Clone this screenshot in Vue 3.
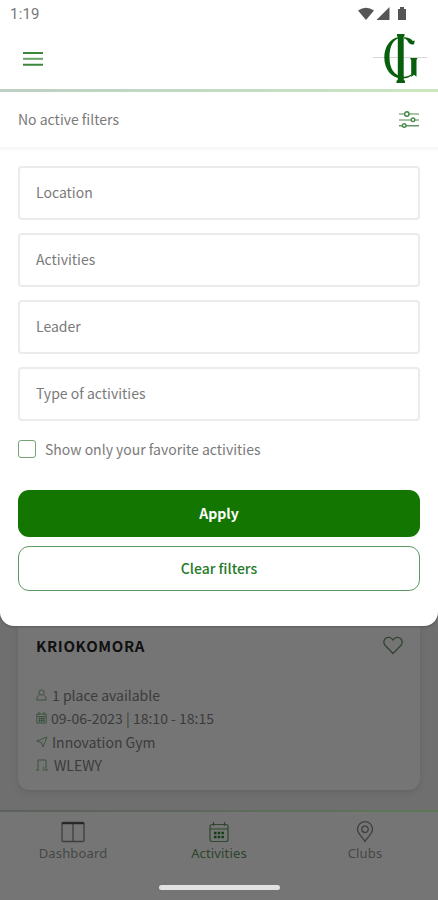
<script setup>
const fields = ['Location', 'Activities', 'Leader', 'Type of activities']
</script>

<template>
  <div class="screen">
    <section class="sheet">
      <div class="status">
        <span class="time">1:19</span>
        <svg class="status-icons" width="50" height="16" viewBox="0 0 50 16" fill="#555">
          <path d="M0 4.500Q8-1 16 4.500L8 14Z" />
          <path d="M31.500 1V14H18.500Z" />
          <path d="M40 3h2V1h4v2h2v11h-8z" />
        </svg>
      </div>
      <header class="header">
        <svg class="menu" width="20" height="16" viewBox="0 0 20 16" fill="none" stroke="#3d873d" stroke-width="2">
          <path d="M0 2H20M0 13.700H20" /><path d="M0 7.800H20" stroke="#69a369" />
        </svg>
        <svg class="logo" width="54" height="51" viewBox="0 0 54 51">
          <path d="M0 24.500H54" stroke="#d3d8d3" stroke-width="1" />
          <path d="M25 4.200C17 5.500 11.300 14 11.300 24.500C11.300 36 18 45 29 45.500C33.500 45.500 36.500 44.300 38.500 42.500L38.500 41C36 43 33.500 43.800 30 43.600C21 43 16.500 35 16.500 24.500C16.500 14 19.500 7.500 25 5.400Z" fill="#08600c" />
          <path d="M31 4.300C35 4.300 38 5.500 39.800 8L41.800 7.500L41 11.200C38.500 12 36.200 11 34.800 8.500C34 7 32.800 5.900 31 5.600Z" fill="#08600c" />
          <path d="M37 25H44.500L43.500 27V43.800L41 41.800L38.200 44V27Z" fill="#08600c" />
          <path d="M24 1H31.500V3L30.700 4V46.500L32 48V50H23.500V48L24.800 46.500V4L24 3Z" fill="#08600c" />
        </svg>
      </header>
      <div class="filter-bar">
        <span>No active filters</span>
        <svg width="20" height="18" viewBox="0 0 20 18" fill="none" stroke="#8db28d" stroke-width="1.400">
          <path d="M0 3H5M10 3H20M0 9H12M16 9H20" /><path d="M0 14.800H3.500M7 14.800H20" stroke="#629862" />
          <circle cx="7.800" cy="3" r="2.200" stroke="#3f863f" />
          <circle cx="14" cy="8.800" r="1.800" stroke="#4c8d4c" />
          <circle cx="5.200" cy="14.500" r="1.800" stroke="#4c8d4c" />
        </svg>
      </div>
      <div class="form">
        <div v-for="field in fields" :key="field" class="field">{{ field }}</div>
        <label class="check"><span class="box"></span><span>Show only your favorite activities</span></label>
        <button class="btn apply">Apply</button>
        <button class="btn clear">Clear filters</button>
      </div>
    </section>

    <main class="content">
      <article class="card">
        <div class="card-head">
          <h2>KRIOKOMORA</h2>
          <svg width="20" height="19" viewBox="0 0 20 19" fill="none" stroke="#354535" stroke-width="1.400">
            <path d="M10 17.500L2 9.300C.2 7 .6 3.500 3 2C5.500 .6 8.500 1.600 10 4C11.500 1.600 14.500 .6 17 2C19.400 3.500 19.800 7 18 9.300Z" />
          </svg>
        </div>
        <ul>
          <li>
            <svg width="12" height="12" viewBox="0 0 12 12"><circle cx="5.500" cy="3.500" r="2.600" /><path d="M3.500 5.700C1.500 7 .8 8.500 .8 11H10.200C10.200 8.500 9.500 7 7.500 5.700" /></svg>
            <span>1 place available</span>
          </li>
          <li class="date">
            <svg width="12" height="12" viewBox="0 0 12 12"><path d="M.8 2H10.200V11H.8ZM.8 4.500H10.200M3 0V3M8 0V3M2.500 6.500H9M2.500 8.700H9M3.500 5.500V10M5.600 5.500V10M7.700 5.500V10" /></svg>
            <span>09-06-2023 | 18:10 - 18:15</span>
          </li>
          <li>
            <svg width="12" height="12" viewBox="0 0 12 12"><path d="M.8 5L11 1L7 11L5.500 6.500Z" /></svg>
            <span>Innovation Gym</span>
          </li>
          <li class="room">
            <svg width="12" height="12" viewBox="0 0 12 12"><path d="M0 11H3M2 11V1H10V11H12M6.500 11H9.500M7.500 8V9.500" /></svg>
            <span>WLEWY</span>
          </li>
        </ul>
      </article>
    </main>

    <nav class="nav">
      <div class="tabs">
        <div class="tab">
          <svg width="24" height="22" viewBox="0 0 24 22" fill="none" stroke="#3d3f3d" stroke-width="1.300"><rect x="1" y="1.500" width="22" height="19" rx="1" /><path d="M12 2V20" /><path d="M1 2.200H23" stroke="#252725" stroke-width="2" /></svg>
          <span>Dashboard</span>
        </div>
        <div class="tab active">
          <svg width="22" height="22" viewBox="0 0 22 22" fill="none" stroke="#2d482d" stroke-width="1.200"><rect x="2" y="3.500" width="18" height="17" rx="2" /><path d="M2 8H20M5.500 1V5M16.500 1V5" /><path d="M6 12H16M6 16H16" stroke="#143c18" stroke-width="2.500" stroke-dasharray="2.500 1.200" /></svg>
          <span>Activities</span>
        </div>
        <div class="tab">
          <svg width="18" height="22" viewBox="0 0 18 22" fill="none" stroke="#3d403d" stroke-width="1.300"><path d="M9 20.500C7 17 1.500 12.500 1.500 8.200A7.500 7.500 0 0 1 16.500 8.200C16.500 12.500 11 17 9 20.500Z" /><circle cx="9" cy="8.300" r="3.200" /></svg>
          <span>Clubs</span>
        </div>
      </div>
      <div class="home"></div>
    </nav>
  </div>
</template>

<style>
body {
  margin: 0;
}
</style>

<style scoped>
* {
  box-sizing: border-box;
}
svg {
  display: block;
  flex: none;
}
.screen {
  width: 438px;
  height: 900px;
  display: flex;
  flex-direction: column;
  overflow: hidden;
  background: #6f6f6f;
  color: #7a7a7a;
  font: 14px/20px "Noto Sans CJK SC", "Noto Sans", sans-serif;
}
.sheet {
  height: 626px;
  flex: none;
  background: #fff;
  border-radius: 0 0 14px 14px;
  box-shadow: 0 1px 2px #4448;
  z-index: 1;
}
.status {
  height: 30px;
  padding: 6px 30px 0 10px;
  display: flex;
  justify-content: space-between;
}
.time {
  font: 15px/17px Roboto, sans-serif;
  letter-spacing: .2px;
  color: #777;
}
.header {
  height: 62px;
  padding: 3px 11px 0 23px;
  display: flex;
  justify-content: space-between;
  border-bottom: 3px solid;
  border-image: linear-gradient(90deg, #bdd0c3, #c2dbc4 50%, #cae8bf) 1;
}
.menu {
  margin-top: 18px;
}
.filter-bar {
  height: 58px;
  padding: 1px 19px 0 18px;
  display: flex;
  align-items: center;
  justify-content: space-between;
  border-bottom: 3px solid #f8f8f8;
}
.filter-bar span {
  padding-bottom: 2px;
}
.form {
  padding: 16px 18px 0;
}
.field {
  height: 54px;
  margin-bottom: 13px;
  padding: 0 16px 2px;
  display: flex;
  align-items: center;
  border: 2px solid #ebebeb;
  border-radius: 4px;
}
.check {
  margin-top: 18px;
  height: 20px;
  display: flex;
  align-items: center;
  gap: 9px;
}
.box {
  width: 18px;
  height: 18px;
  border: 1.5px solid #74a374;
  border-radius: 3px;
}
.btn {
  display: block;
  width: 100%;
  padding: 0;
  border-radius: 11px;
  font: 700 14px/20px "Noto Sans CJK SC", "Noto Sans", sans-serif;
}
.apply {
  margin-top: 31px;
  height: 47px;
  padding-bottom: 2px;
  border: 0;
  background: #137600;
  color: #fff;
}
.clear {
  margin-top: 9px;
  height: 45px;
  padding-bottom: 1px;
  border: 1px solid #5d9960;
  background: #fff;
  color: #267a2a;
  font-weight: 500;
}
.content {
  height: 184px;
  padding: 0 18px 20px;
}
.card {
  height: 164px;
  padding: 10px 17px 0 18px;
  border-radius: 0 0 11px 11px;
  background: #757575;
  box-shadow: 0 2px 5px #5556;
}
.card-head {
  display: flex;
  justify-content: space-between;
}
h2 {
  margin: 0;
  font-size: 15px;
  line-height: 20px;
  letter-spacing: .65px;
  color: #101010;
}
ul {
  margin: 27px 0 0;
  padding: 0;
  list-style: none;
  color: #3b3b3b;
}
li {
  height: 23.5px;
  display: flex;
  align-items: center;
  gap: 4px;
}
li svg {
  fill: none;
  stroke: #3d543f;
  stroke-width: 1;
}
.date {
  gap: 3px;
}
.room {
  gap: 6px;
}
.nav {
  height: 90px;
  border-top: 2px solid;
  border-image: linear-gradient(90deg, #5c605c, #5f685e 45%, #5c7a55) 1;
  background: #757575;
}
.tabs {
  display: grid;
  grid-template-columns: repeat(3, 1fr);
}
.tab {
  padding-top: 9px;
  display: flex;
  flex-direction: column;
  align-items: center;
  font: 13px/20px "Noto Sans", sans-serif;
  letter-spacing: .15px;
  color: #454745;
}
.active {
  color: #2b442b;
}
.home {
  width: 121px;
  height: 5px;
  margin: 22px auto 0;
  border-radius: 3px;
  background: #e2e2e2;
}
</style>
